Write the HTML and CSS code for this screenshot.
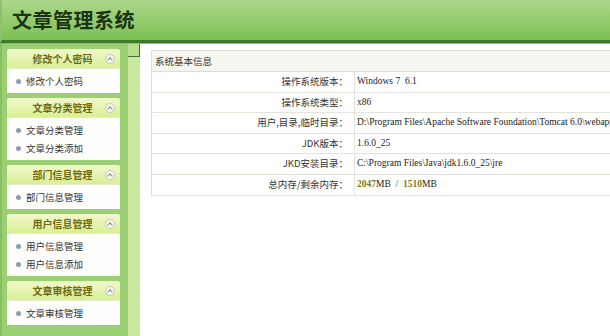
FILE: index.html
```html
<!DOCTYPE html>
<html lang="zh">
<head>
<meta charset="utf-8">
<title>文章管理系统</title>
<link rel="stylesheet" href="styles.css">
</head>
<body>
<div class="header"><h1 class="title">文章管理系统</h1></div>
<div class="main">
  <div class="sidebar">
    <div class="panel">
      <div class="panel-head"><span class="panel-title">修改个人密码</span><span class="fold"></span></div>
      <ul class="panel-body"><li>修改个人密码</li></ul>
    </div>
    <div class="panel">
      <div class="panel-head"><span class="panel-title">文章分类管理</span><span class="fold"></span></div>
      <ul class="panel-body"><li>文章分类管理</li><li>文章分类添加</li></ul>
    </div>
    <div class="panel">
      <div class="panel-head"><span class="panel-title">部门信息管理</span><span class="fold"></span></div>
      <ul class="panel-body"><li>部门信息管理</li></ul>
    </div>
    <div class="panel">
      <div class="panel-head"><span class="panel-title">用户信息管理</span><span class="fold"></span></div>
      <ul class="panel-body"><li>用户信息管理</li><li>用户信息添加</li></ul>
    </div>
    <div class="panel">
      <div class="panel-head"><span class="panel-title">文章审核管理</span><span class="fold"></span></div>
      <ul class="panel-body"><li>文章审核管理</li></ul>
    </div>
  </div>
  <div class="splitter"><div class="toggle"></div></div>
  <div class="content">
    <div class="info">
      <div class="info-title">系统基本信息</div>
      <div class="row"><div class="label">操作系统版本：</div><div class="value">Windows 7&nbsp;&nbsp;6.1</div></div>
      <div class="row"><div class="label">操作系统类型：</div><div class="value">x86</div></div>
      <div class="row"><div class="label">用户,目录,临时目录：</div><div class="value">D:\Program Files\Apache Software Foundation\Tomcat 6.0\webapps\wz\</div></div>
      <div class="row"><div class="label">JDK版本：</div><div class="value">1.6.0_25</div></div>
      <div class="row"><div class="label">JKD安装目录：</div><div class="value">C:\Program Files\Java\jdk1.6.0_25\jre</div></div>
      <div class="row"><div class="label">总内存/剩余内存：</div><div class="value"><span class="num">2047</span>MB &nbsp;/&nbsp; <span class="num">1510</span>MB</div></div>
    </div>
  </div>
</div>
</body>
</html>
```
FILE: styles.css
```css
html, body {
  margin: 0;
  padding: 0;
  height: 100%;
  overflow: hidden;
  background: #ffffff;
  font-family: "Noto Sans CJK SC", "Liberation Sans", sans-serif;
}
.header {
  height: 40px;
  background: linear-gradient(#acd78a, #7dc153);
  border-bottom: 3px solid #3f7b2d;
  box-shadow: 0 1px 0 #86c263;
  border-left: 2px solid #8fbf70;
  display: flex;
  align-items: center;
}
.title {
  margin: 0 0 0 10px;
  font-size: 20px;
  line-height: 24px;
  font-weight: bold;
  color: #1b3311;
  letter-spacing: 0.5px;
}
.main {
  display: flex;
  height: calc(100% - 44px);
  margin-top: 1px;
}
.sidebar {
  width: 116px;
  flex: none;
  background: #9acf73;
  border-left: 2px solid #88bf62;
  padding: 5px 5px 0 5px;
  display: flex;
  flex-direction: column;
  gap: 5px;
}
.panel {
  background: #fefefc;
  border-radius: 3px 3px 0 0;
  width: 113px;
}
.panel-head {
  height: 19px;
  position: relative;
  background: linear-gradient(#f1f8cc, #d9ef95);
  border-radius: 3px 3px 0 0;
  border-bottom: 1px solid #e4eecc;
  text-align: center;
  font-size: 10px;
  line-height: 19px;
}
.panel-title {
  display: inline-block;
  vertical-align: top;
  margin-right: 2px;
  font-size: 10px;
  line-height: 19px;
  font-weight: bold;
  color: #6d6b12;
}
.fold {
  position: absolute;
  right: 5px;
  top: 5px;
  width: 8px;
  height: 8px;
  border-radius: 50%;
  background: #f6f6f2;
  border: 1px solid #c8c8be;
}
.fold::after {
  content: "";
  position: absolute;
  left: 2px;
  top: 3px;
  width: 3px;
  height: 3px;
  border-left: 1px solid #8a8a8a;
  border-top: 1px solid #8a8a8a;
  transform: rotate(45deg);
}
.panel-body {
  list-style: none;
  margin: 0;
  padding: 3px 0 3px 0;
}
.panel-body li {
  height: 18px;
  line-height: 18px;
  font-size: 9.5px;
  color: #333;
  padding-left: 19px;
  position: relative;
}
.panel-body li::before {
  content: "";
  position: absolute;
  left: 9px;
  top: 7px;
  width: 5px;
  height: 5px;
  border-radius: 50%;
  background: #8e9cae;
}
.splitter {
  width: 12px;
  flex: none;
  background: #cbe9a3;
}
.toggle {
  background: #b8e08c;
  border-right: 1px solid #4d6b3c;
  border-bottom: 1px solid #4d6b3c;
  box-sizing: border-box;
  height: 13px;
}
.content {
  flex: 1;
  overflow: hidden;
  padding: 6px 0 0 11px;
}
.info {
  width: 640px;
  border: 1px solid #dcdfd6;
  border-bottom: none;
}
.info-title {
  height: 20px;
  line-height: 20px;
  background: #f4f6ef;
  border-bottom: 1px solid #dcdfd6;
  padding-left: 3px;
  font-size: 9.5px;
  color: #333;
}
.row {
  display: flex;
  height: 19.6px;
  border-bottom: 1.5px solid #e2e4dc;
  font-size: 9.5px;
  color: #333;
}
.label {
  width: 196px;
  flex: none;
  text-align: right;
  padding-right: 6px;
  border-right: 1px solid #e2e4dc;
  line-height: 19.6px;
}
.value {
  padding-left: 2px;
  font-family: "Liberation Serif", "Noto Sans CJK SC", serif;
  font-size: 9.5px;
  line-height: 19.6px;
  white-space: nowrap;
  color: #222;
}
.num {
  color: #7f7a18;
  font-weight: bold;
}
```
